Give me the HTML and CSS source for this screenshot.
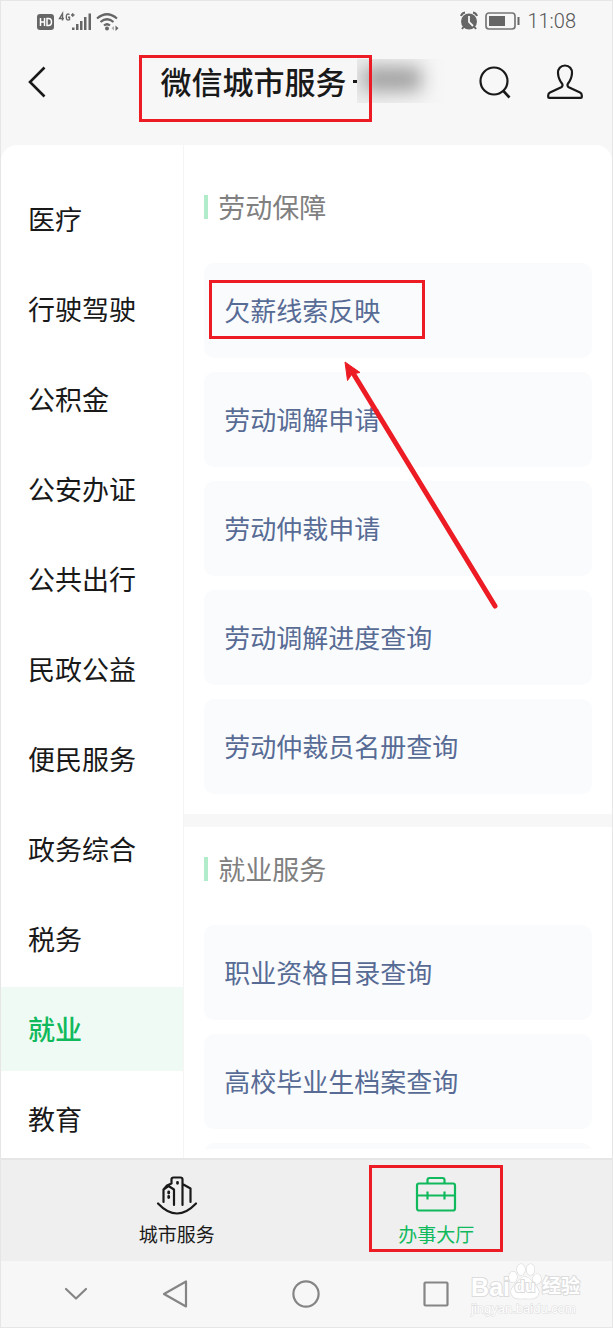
FILE: index.html
```html
<!DOCTYPE html>
<html lang="zh-CN">
<head>
<meta charset="utf-8">
<meta name="viewport" content="width=device-width, initial-scale=1">
<title>微信城市服务</title>
<link rel="stylesheet" href="styles.css">
</head>
<body>
<div class="app">
  <div class="status">
    <div class="status-group">
      <svg width="82" height="24" viewBox="0 0 82 24" fill="#666">
        <rect x="0" y="5" width="17" height="16" rx="3"/>
        <path d="M3.5 9v8M7.500 9v8M3.500 13h4M10 9.500v7h1.500q3 0 3-3.500t-3-3.500z" fill="none" stroke="#fff" stroke-width="1.500"/>
        <path d="M25.500 11.500V4.500L22.500 9.500H27M32.500 5.500Q29.300 3.800 29.300 8T32.500 10.700V8.300H31M34 6h3.500M35.700 4.200v3.600" fill="none" stroke="#666" stroke-width="1.400"/>
        <path d="M35 18.500h2.500V21H35zM39 15h2.500v6H39zM43 12h2.500v9H43zM47 8h2.500v13H47zM51.500 4.500H54V21h-2.500z"/>
        <path d="M60 9.500q10-8.500 20 0M63.500 13q6.500-5.500 13 0M67 16.500q3-2.500 6 0" fill="none" stroke="#666" stroke-width="2.200"/>
        <circle cx="70" cy="19.500" r="2"/><path d="M77 17l-2.500 2.200 2.500 2.200z" opacity=".5"/><path d="M78.500 16.500l3 2.700-3 2.700z"/>
      </svg>
    </div>
    <div class="status-group">
      <svg width="60" height="20" viewBox="0 0 60 20">
        <circle cx="9" cy="10.500" r="8" fill="#666"/>
        <path d="M1 5q1-3 4-3.500M13 1.500q3 .5 4 3.500M3.500 16l-1.500 2M14.500 16l1.500 2" fill="none" stroke="#666" stroke-width="2"/>
        <path d="M9 5v6l4 4" fill="none" stroke="#f7f7f7" stroke-width="1.800"/>
        <rect x="26" y="2" width="29" height="16" rx="3" fill="none" stroke="#777" stroke-width="1.700"/>
        <rect x="29" y="5" width="16" height="10" fill="#666"/><path d="M58.500 6v8" stroke="#666" stroke-width="2"/>
      </svg>
      <span class="clock">11:08</span>
    </div>
  </div>

  <header class="header">
    <button class="icon-button" type="button" aria-label="返回">
      <svg width="18" height="32" viewBox="0 0 18 32"><path d="M16.500 1.500L2 16l14.500 14.500" fill="none" stroke="#191919" stroke-width="2.600"/></svg>
    </button>
    <h1 class="title"><span>微信城市服务</span><i class="dot"></i><span class="redacted"><i></i></span><span class="mark mark-title"></span></h1>
    <div class="actions">
      <button class="icon-button" type="button" aria-label="搜索">
        <svg width="32" height="34" viewBox="0 0 32 34"><circle cx="15" cy="16" r="13.500" fill="none" stroke="#191919" stroke-width="2.200"/><path d="M24 25.500l6.500 7" stroke="#191919" stroke-width="2.600"/></svg>
      </button>
      <button class="icon-button" type="button" aria-label="我的">
        <svg width="36" height="36" viewBox="0 0 36 36"><path d="M18 1.500c-4.500 0-7.200 3.200-7 7.500.2 4.500 1.600 7.500 4 10.500.9 1.200.7 3-.8 3.800L3 28.500c-1.300.6-1.800 1.500-1.800 3V33q0 .8 1 .8h31.600q1 0 1-.8v-1.500c0-1.500-.5-2.400-1.800-3l-11.200-5.200c-1.500-.8-1.700-2.600-.8-3.800 2.400-3 3.800-6 4-10.500.2-4.300-2.500-7.500-7-7.500z" fill="none" stroke="#191919" stroke-width="2.200"/></svg>
      </button>
    </div>
  </header>

  <main class="main">
    <nav class="categories">
      <a href="#yl">医疗</a>
      <a href="#xs">行驶驾驶</a>
      <a href="#gjj">公积金</a>
      <a href="#ga">公安办证</a>
      <a href="#gg">公共出行</a>
      <a href="#mz">民政公益</a>
      <a href="#bm">便民服务</a>
      <a href="#zw">政务综合</a>
      <a href="#sw">税务</a>
      <a href="#jy" class="active">就业</a>
      <a href="#jiaoyu">教育</a>
    </nav>
    <div class="content">
      <section class="section">
        <h2>劳动保障</h2>
        <ul class="cards">
          <li><a href="#s1"><span class="marked">欠薪线索反映<i class="mark mark-item"></i></span></a></li>
          <li><a href="#s2">劳动调解申请</a></li>
          <li><a href="#s3">劳动仲裁申请</a></li>
          <li><a href="#s4">劳动调解进度查询</a></li>
          <li><a href="#s5">劳动仲裁员名册查询</a></li>
        </ul>
        <svg class="arrow" width="156" height="250" viewBox="0 0 156 250"><path d="M9 12L151 245" stroke="#ed1c24" stroke-width="5" stroke-linecap="round"/><path d="M1 1l15 10.500-8 1.500-4.500 6.500z" fill="#ed1c24" stroke="#ed1c24" stroke-width="1"/></svg>
      </section>
      <section class="section">
        <h2>就业服务</h2>
        <ul class="cards">
          <li><a href="#s6">职业资格目录查询</a></li>
          <li><a href="#s7">高校毕业生档案查询</a></li>
          <li></li>
        </ul>
      </section>
    </div>
  </main>

  <nav class="tabs">
    <a href="#city">
      <svg width="42" height="40" viewBox="0 0 42 40" fill="none" stroke="#191919" stroke-width="2.200" stroke-linecap="round" stroke-linejoin="round">
        <path d="M7.500 26V13.500l5-3.500 5.500 3.500V29M8 13l3-3.500 4.500-2V3.500q0-2 2-2h7q2 0 2 2V29M26.500 8l8 4.500V26M2 27.500q19 20 38 0"/>
        <path d="M12.700 16v1M12.700 20.500v1M21.500 6.500v.8" stroke-width="2.800"/>
      </svg>
      <span>城市服务</span>
    </a>
    <a href="#hall" class="active">
      <svg width="42" height="40" viewBox="0 0 42 40" fill="none" stroke="#10b95c" stroke-width="2.200" stroke-linejoin="round">
        <rect x="2" y="7.500" width="38" height="27" rx="2"/><path d="M12.500 7.500V4q0-2 2-2h13q2 0 2 2v3.500M2 19.500h38M12.500 15.500v8M29.500 15.500v8"/>
      </svg>
      <span>办事大厅</span>
      <i class="mark mark-tab"></i>
    </a>
  </nav>

  <div class="system">
    <button type="button" aria-label="收起"><svg width="24" height="14" viewBox="0 0 24 14"><path d="M2 2l10 9.500L22 2"/></svg></button>
    <button type="button" aria-label="后退"><svg width="26" height="28" viewBox="0 0 26 28"><path d="M24 1.500v25L2 14z"/></svg></button>
    <button type="button" aria-label="主页"><svg width="28" height="28" viewBox="0 0 28 28"><circle cx="14" cy="14" r="12.600"/></svg></button>
    <button type="button" aria-label="最近任务"><svg width="26" height="26" viewBox="0 0 26 26"><rect x="1.500" y="1.500" width="23" height="23" rx="1"/></svg></button>
    <div class="watermark">
      <div class="brand"><span>Bai</span><span class="paw"><svg width="34" height="38" viewBox="0 0 34 38" fill="#fff" stroke="#d8d8d8" stroke-width="1.200"><ellipse cx="5" cy="14" rx="4" ry="5.500"/><ellipse cx="13" cy="6.500" rx="4" ry="5.500"/><ellipse cx="22.500" cy="6.500" rx="4" ry="5.500"/><ellipse cx="29" cy="16" rx="4" ry="5"/><path d="M17 14c-5 0-6 4-10 8-4 3-5 7-3 10 2 4 6 4 13 3.500 7 .5 11 .5 13-3.500 2-3 0-7-3-10-4-4-5-8-10-8z"/></svg><b>du</b></span><span class="cn">经验</span></div>
      <div class="site">jingyan.baidu.com</div>
    </div>
  </div>
</div>
</body>
</html>
```
FILE: styles.css
```css
* { box-sizing: border-box; }

body {
  margin: 0;
  background: #f7f7f7;
  color: #191919;
  font-family: "Noto Sans CJK SC", sans-serif;
}

a { color: inherit; text-decoration: none; }
svg { display: block; flex: none; }

button {
  padding: 0;
  border: 0;
  background: none;
}

.app {
  display: flex;
  flex-direction: column;
  height: 100vh;
  border: 1px solid #e6e6e6;
}

.status {
  display: flex;
  justify-content: space-between;
  align-items: center;
  height: 40px;
  padding: 0 36px;
}

.status-group {
  display: flex;
  align-items: center;
  gap: 7px;
}

.clock {
  color: #555;
  font: 300 20px/24px Roboto, sans-serif;
}

.header {
  display: flex;
  align-items: center;
  height: 82px;
  padding: 0 29px 0 27px;
}

.title {
  position: relative;
  display: flex;
  align-items: center;
  margin: 0 auto;
  padding: 0 0 2px 84px;
  font-size: 31px;
  font-weight: 500;
  line-height: 44px;
}

.dot {
  width: 4px;
  height: 3px;
  margin: 0 0 0 6px;
  background: #191919;
}

.redacted {
  width: 92px;
  height: 44px;
  overflow: hidden;
  background: linear-gradient(90deg, #eee, #f7f7f7);
}

.redacted i {
  display: block;
  width: 58px;
  height: 24px;
  margin: 8px 6px;
  background: #a0a0a0;
  filter: blur(9px);
}

.mark {
  position: absolute;
  border: 3px solid #ed1c24;
  pointer-events: none;
}

.mark-title { inset: -4px 77px -17px 62px; }
.mark-item { inset: -10px -45px -10px -15px; }
.mark-tab { inset: 5px auto 9px; width: 134px; }

.actions {
  display: flex;
  align-items: center;
  gap: 36px;
}

.main {
  display: flex;
  flex: 1;
  min-height: 0;
  margin-top: 22px;
  overflow: hidden;
  border-radius: 16px 16px 0 0;
  background: #fff;
}

.categories {
  display: flex;
  flex: none;
  flex-direction: column;
  gap: 6px;
  width: 30%;
  padding-top: 32px;
  border-right: 1px solid #f5f5f5;
  font-size: 27px;
  line-height: 84px;
}

.categories a { padding-left: 27px; }

.categories .active {
  background: #effaf4;
  color: #10b95c;
  font-weight: 500;
}

.content {
  flex: 1;
  margin-bottom: 9px;
  padding-top: 20px;
  overflow: hidden;
}

.section {
  position: relative;
  padding: 0 20px 20px;
}

.section + .section { border-top: 13px solid #f7f7f7; }

h2 {
  display: flex;
  align-items: center;
  gap: 10px;
  margin: 0;
  padding: 22px 0 36px;
  color: #808080;
  font-size: 27px;
  font-weight: 400;
  line-height: 40px;
}

h2::before {
  width: 4px;
  height: 24px;
  background: #b0ebca;
  content: "";
}

.cards {
  display: grid;
  gap: 14px;
  margin: 0;
  padding: 0;
  list-style: none;
}

.cards li {
  height: 95px;
  border-radius: 10px;
  background: #fafbfd;
}

.cards a {
  display: block;
  padding: 27px 20px;
  color: #576b95;
  font-size: 26px;
  line-height: 39px;
}

.marked {
  position: relative;
  display: inline-block;
}

.arrow {
  position: absolute;
  top: 196px;
  left: 160px;
}

.tabs {
  display: grid;
  grid-template-columns: 1fr 1fr;
  height: 103px;
  padding: 0 46px;
  border-top: 2px solid #e6e6e6;
  background: #efefef;
  font-size: 19px;
  line-height: 28px;
}

.tabs a {
  position: relative;
  display: flex;
  flex-direction: column;
  align-items: center;
  gap: 4px;
  padding-top: 16px;
}

.tabs .active { color: #10b95c; }

.system {
  position: relative;
  display: grid;
  grid-template-columns: 98fr 100fr 162fr 98fr;
  align-items: center;
  height: 66px;
  padding: 0 127px 0 26px;
}

.system button { display: grid; place-items: center; }

.system button svg {
  fill: none;
  stroke: #858585;
  stroke-width: 2.2;
  stroke-linejoin: round;
  stroke-linecap: round;
}

.watermark {
  position: absolute;
  right: 32px;
  bottom: 10px;
  color: #fff;
  font-family: "Liberation Sans", "Noto Sans CJK SC", sans-serif;
  -webkit-text-stroke: 2px #dcdcdc;
  paint-order: stroke fill;
}

.brand {
  display: flex;
  align-items: flex-end;
  font-size: 25px;
  font-weight: 700;
  line-height: 28px;
}

.paw {
  position: relative;
  margin-left: -2px;
}

.paw b {
  position: absolute;
  inset: 12px 0 0;
  font-size: 17px;
  line-height: 24px;
  text-align: center;
}

.cn { font-size: 19px; }

.site {
  font-size: 13px;
  line-height: 16px;
  -webkit-text-stroke-width: 1px;
}
```
